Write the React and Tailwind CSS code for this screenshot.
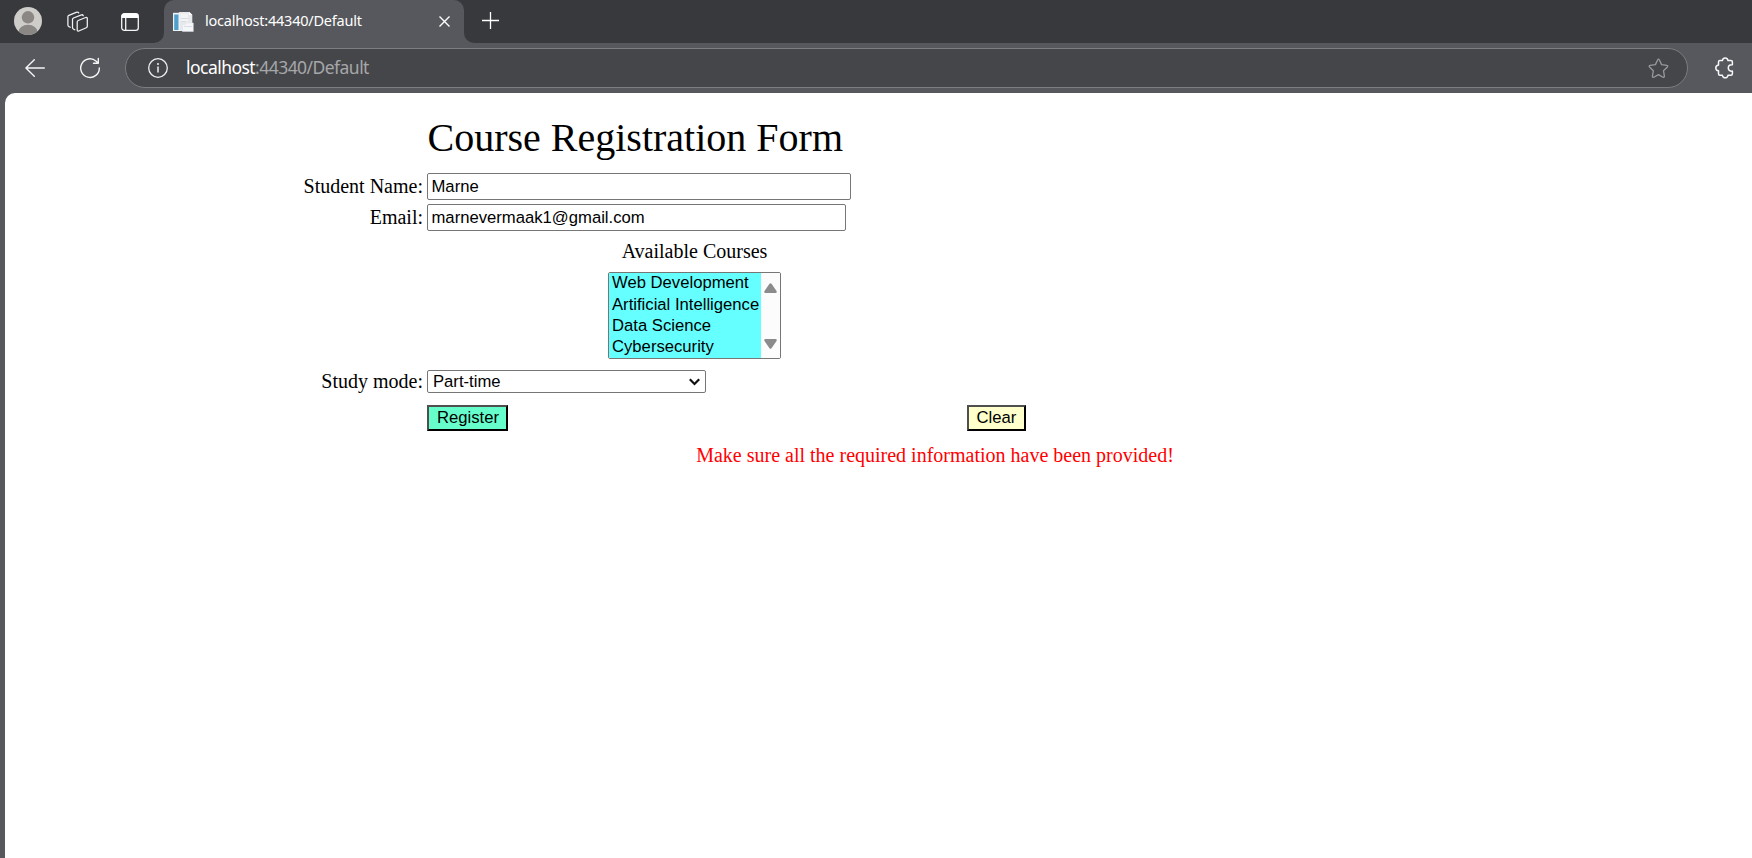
import React from "react";

function ProfileIcon() {
  return (
    <svg width="28" height="28" viewBox="0 0 28 28">
      <defs>
        <clipPath id="avatar">
          <circle cx="14" cy="14" r="14" />
        </clipPath>
      </defs>
      <g clipPath="url(#avatar)">
        <rect width="28" height="28" fill="#cfcdca" />
        <circle cx="14" cy="10.3" r="6.2" fill="#8a8785" />
        <ellipse cx="14" cy="25" rx="9.6" ry="7.2" fill="#8a8785" />
      </g>
    </svg>
  );
}

function WorkspacesIcon() {
  return (
    <svg width="22" height="22" viewBox="0 0 22 22" fill="none" stroke="#f2f2f2" strokeWidth="1.25" strokeLinejoin="round" strokeLinecap="round">
      <path d="M10.200 11c0-.7.4-1.300 1-1.500l7.500-3c.8-.3 1.600.2 1.600 1v7.700c0 .7-.4 1.300-1 1.500l-7.500 3.300c-.8.300-1.600-.2-1.600-1z" />
      <path d="M7.800 18.800l-1.200-.6c-.7-.3-1.100-.9-1.100-1.600V8.500c0-.7.400-1.200 1-1.500l7.900-3.100c.7-.3 1.500 0 1.900.8" />
      <path d="M3.300 16.200l-1.300-.6c-.8-.4-1.100-.9-1.100-1.700V5.800c0-.7.400-1.200 1-1.500l7.900-3.100c.7-.3 1.500 0 1.900.7" />
    </svg>
  );
}

function TabActionsIcon() {
  return (
    <svg width="18" height="18" viewBox="0 0 18 18">
      <rect x=".7" y=".7" width="16.600" height="16.600" rx="2.600" fill="none" stroke="#f5f5f5" strokeWidth="1.300" />
      <path d="M.6 5V3A2.500 2.500 0 0 1 3 .6h12A2.500 2.500 0 0 1 17.400 3v2z" fill="#fff" />
      <path d="M4.700 5v12" stroke="#f5f5f5" strokeWidth="1.300" />
    </svg>
  );
}

function PageIcon() {
  return (
    <svg width="21" height="20" viewBox="0 0 21 20">
      <path d="M0 .8h14v18.200H0z" fill="#eef3f6" />
      <path d="M1.200 2.500h4.300v15.500H1.200z" fill="#4f9fcd" />
      <path d="M5.500 0h11l2.800 2.800V18.500H7V1.500z" fill="#e6e8eb" />
      <path d="M7.500 1.500h7.500v8H7.500z" fill="#f3f4f6" />
      <path d="M8 6.500h7M8 9.500h5" stroke="#d8dce0" />
      <path d="M16 0v3h3.300z" fill="#fff" />
      <path d="M9.500 12.500l3 .0V11h7.800v8.600H9.500z" fill="#f5f6fa" stroke="#dde0e6" strokeWidth=".5" />
      <path d="M11 14.500h8" stroke="#d9dce3" />
    </svg>
  );
}

function TabStrip() {
  return (
    <div className="flex h-[43px] bg-[#38393d] pl-[14px]">
      <div className="flex h-[43px] w-[150px] shrink-0 items-center">
        <div className="-mt-[1px]"><ProfileIcon /></div>
        <div className="ml-[25px]"><WorkspacesIcon /></div>
        <div className="ml-[32px]"><TabActionsIcon /></div>
      </div>
      <div className="relative flex w-[300px] shrink-0 items-center rounded-t-[10px] bg-[#57585d] pl-[9px] pr-[14px]">
        <svg className="absolute bottom-0 -left-[10px]" width="10" height="10" viewBox="0 0 10 10">
          <path d="M10 0v10H0A10 10 0 0 0 10 0z" fill="#57585d" />
        </svg>
        <svg className="absolute bottom-0 -right-[10px]" width="10" height="10" viewBox="0 0 10 10">
          <path d="M0 0v10h10A10 10 0 0 1 0 0z" fill="#57585d" />
        </svg>
        <PageIcon />
        <span className="ml-[11px] -mt-[2px] whitespace-nowrap font-['Noto_Sans',sans-serif] text-[14.500px] tracking-[-0.220px] text-white">
          localhost:44340/Default
        </span>
        <svg className="ml-auto" width="11" height="11" viewBox="0 0 11 11" stroke="#fff" strokeWidth="1.400">
          <path d="M.5.5l10 10M10.500.5l-10 10" />
        </svg>
      </div>
      <svg className="ml-[18px] mt-[12px]" width="17" height="17" viewBox="0 0 17 17" stroke="#fff" strokeWidth="1.300">
        <path d="M8.500 0v17M0 8.500h17" />
      </svg>
    </div>
  );
}

function Toolbar() {
  return (
    <div className="flex h-[50px] items-center bg-[#57585d] pl-[25px]">
      <svg className="-mt-[1px]" width="20" height="18" viewBox="0 0 20 18" fill="none" stroke="#f5f5f5" strokeWidth="1.400" strokeLinecap="round" strokeLinejoin="round">
        <path d="M9.300.8L.9 9l8.400 8.200M1 9h18.300" />
      </svg>
      <svg className="ml-[34px]" width="22" height="22" viewBox="0 0 22 22" fill="none" stroke="#f5f5f5" strokeWidth="1.400" strokeLinecap="round" strokeLinejoin="round">
        <path d="M20.300 11A9.300 9.300 0 1 1 17.200 4.200L19 6M19.300 1.500v4.800h-4.800" />
      </svg>
      <div className="ml-[24px] flex h-10 w-[1563px] shrink-0 items-center rounded-full border border-[#7c7d81] bg-[#45464a] pl-[22px] pr-[18px]">
        <svg width="20" height="20" viewBox="0 0 20 20" fill="none" stroke="#f0f0f0" strokeWidth="1.300">
          <circle cx="10" cy="10" r="9.300" />
          <path d="M10 8.500v6" strokeWidth="1.500" />
          <circle cx="10" cy="5.900" r="1" fill="#f0f0f0" stroke="none" />
        </svg>
        <div className="ml-[18px] -mt-[2px] whitespace-nowrap font-['Noto_Sans',sans-serif] text-[17.500px] tracking-[-0.540px] text-[#a6a7a9]">
          <span className="text-white">localhost</span>:44340/Default
        </div>
        <svg className="ml-auto" width="21" height="21" viewBox="0 0 21 21" fill="none" stroke="#98999c" strokeWidth="1.300" strokeLinejoin="round">
          <path d="M9.700 1.700c.3-.7 1.300-.7 1.600 0l2.300 4.900 5.300.8c.8.1 1.100 1 .5 1.600l-3.900 3.800.9 5.400c.1.800-.7 1.300-1.400 1l-4.500-2.600-4.700 2.600c-.7.300-1.500-.2-1.400-1l.9-5.400L1.500 9c-.6-.6-.3-1.500.5-1.600l5.400-.8z" />
        </svg>
      </div>
      <svg className="ml-[27px] shrink-0" width="20" height="22" viewBox="0 0 20 22" fill="none" stroke="#f7f7f7" strokeWidth="1.500" strokeLinejoin="round">
        <path d="M3.500 5c0-.9.600-1.400 1.400-1.400h2.500C7.700 2 8.700 1.100 10.200 1.100S12.700 2 13 3.600h2.900c.9 0 1.500.6 1.500 1.400v2.700c-2.700-.3-4.100 1.200-4.100 3.200s1.400 3.500 4.100 3.200v2.700c0 .9-.6 1.500-1.500 1.500H13c-.3 1.600-1.300 2.500-2.800 2.500s-2.500-.9-2.800-2.500H4.900c-.9 0-1.400-.6-1.400-1.500v-3C1.900 13.500.8 12.500.8 10.900s1.100-2.600 2.700-2.900z" />
      </svg>
    </div>
  );
}

const courses = ["Web Development", "Artificial Intelligence", "Data Science", "Cybersecurity"];

function CourseList() {
  return (
    <div className="flex h-[87px] w-[173px] overflow-hidden rounded-[2px] border border-[#767676] bg-white font-['Liberation_Sans',Arial,sans-serif] text-[16.667px]">
      <div className="w-[152px] shrink-0 bg-[#66ffff] pt-[0.4px]">
        {courses.map((c) => (
          <div key={c} className="h-[21.150px] whitespace-nowrap pl-[3px] leading-[19px]">{c}</div>
        ))}
      </div>
      <div className="flex grow flex-col items-center justify-between bg-[#fcfcfc] pt-[10px] pb-[9px]">
        <svg width="13" height="10" viewBox="0 0 13 10" fill="#8b8b8b"><path d="M5.500.8q1-1.200 2 0l5 7.200q.8 2-1 2h-10q-1.800 0-1-2z" /></svg>
        <svg width="13" height="10" viewBox="0 0 13 10" fill="#8b8b8b"><path d="M5.500 9.200q1 1.200 2 0l5-7.200q.8-2-1-2h-10q-1.800 0-1 2z" /></svg>
      </div>
    </div>
  );
}

const field =
  "h-[27px] rounded-[2px] border border-[#767676] bg-white px-[3.5px] font-['Liberation_Sans',Arial,sans-serif] text-[16.667px] leading-[25px] text-black outline-none";
const button =
  "h-[26px] border-2 border-t-[#4f4f4f] border-l-[#4f4f4f] border-r-black border-b-black font-['Liberation_Sans',Arial,sans-serif] text-[16.667px] leading-[20px] text-black";

function RegistrationForm() {
  return (
    <form className="grid grid-cols-[418px_1fr] gap-x-[4px] text-[20px] leading-[23px] text-black">
      <h1 className="col-start-2 h-[80px] pt-[22px] pl-[0.5px] text-[40px] leading-[46px]">Course Registration Form</h1>

      <label className="pt-[2px] text-right">Student Name:</label>
      <div className="h-[31px]">
        <input className={field + " block w-[424px]"} defaultValue="Marne" />
      </div>

      <label className="pt-[2px] text-right">Email:</label>
      <div className="h-[31px]">
        <input className={field + " block w-[419px]"} defaultValue="marnevermaak1@gmail.com" />
      </div>

      <div className="col-start-2 flex h-[135px] w-[535px] flex-col items-center pt-[5px]">
        <div className="mb-[9px]">Available Courses</div>
        <CourseList />
      </div>

      <label className="text-right">Study mode:</label>
      <div className="flex h-[35px] items-start">
        <div className="flex h-[23px] w-[279px] items-center rounded-[2px] border border-[#767676] bg-white pl-[5px] pr-[5px] font-['Liberation_Sans',Arial,sans-serif] text-[16.667px]">
          <span className="leading-[21px]">Part-time</span>
          <svg className="ml-auto" width="11" height="8" viewBox="0 0 11 8" fill="none" stroke="#101010" strokeWidth="2.200">
            <path d="M.8 1.200l4.700 4.800 4.700-4.800" />
          </svg>
        </div>
      </div>

      <div className="col-start-2 flex h-[39px]">
        <button type="button" className={button + " w-[81px] bg-[#66ffcc] pl-px"}>Register</button>
        <button type="button" className={button + " ml-[459px] w-[59px] bg-[#ffffcc]"}>Clear</button>
      </div>

      <p className="col-start-2 w-[1016px] text-center text-[#ff0000]">
        Make sure all the required information have been provided!
      </p>
    </form>
  );
}

export default function App() {
  return (
    <div className="flex h-[858px] w-[1752px] flex-col overflow-hidden bg-[#57585d]">
      <TabStrip />
      <Toolbar />
      <main className="ml-[5px] grow rounded-tl-[10px] bg-white font-['Liberation_Serif','Times_New_Roman',serif]">
        <RegistrationForm />
      </main>
    </div>
  );
}
